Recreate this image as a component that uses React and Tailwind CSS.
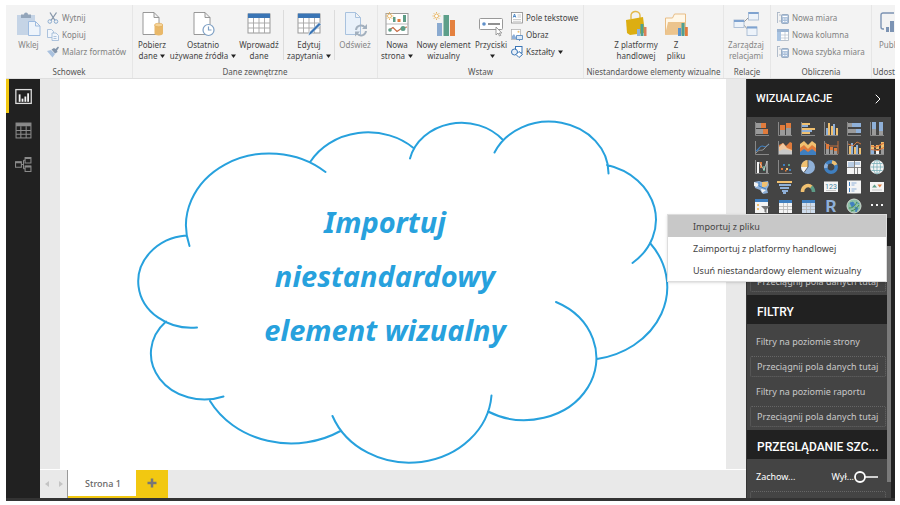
import React, { useState } from 'react';
import { ChevronRight } from 'lucide-react';

const ORANGE = '#e07b3c';
const YELLOW = '#f0c070';
const BLUE = '#8fb0d8';
const NAVY = '#3f7fc0';
const GREY = '#9a9a9a';
const GREEN = '#5d9c86';
const WHITE = '#f4f4f4';

/* ---------- icon helpers ---------- */

const Svg = ({ size = 'w-4 h-4', box = '0 0 16 16', children }) => (
  <svg className={`${size} shrink-0 overflow-visible`} viewBox={box} fill="none" aria-hidden="true">
    {children}
  </svg>
);

// rows: [x, y, width, height, fill]
const Rects = ({ rows }) =>
  rows.map(([x, y, w, h, fill], i) => <rect key={i} x={x} y={y} width={w} height={h} fill={fill} />);

const Axis = () => <path d="M1.5 1v13.5H15" stroke="#888" strokeWidth="1" />;

const Chart = ({ rows, children }) => (
  <Svg>
    <Axis />
    <Rects rows={rows} />
    {children}
  </Svg>
);

const Grid = ({ fill = WHITE }) => (
  <Svg>
    <rect x="2" y="2" width="13" height="13" fill={fill} />
    <rect x="2" y="2" width="13" height="3" fill={NAVY} />
    <path d="M2 8.5h13M2 11.5h13M6.5 5v10M10.5 5v10" stroke="#b5b5b5" strokeWidth="0.8" />
  </Svg>
);

const visuals = [
  ['Skumulowany wykres słupkowy', <Chart rows={[[2, 2, 5, 5, GREY], [7, 2, 5, 5, ORANGE], [2, 8, 7, 5, GREY], [9, 8, 5, 5, ORANGE]]} />],
  ['Skumulowany wykres kolumnowy', <Chart rows={[[3, 9, 5, 5, GREY], [3, 4, 5, 5, ORANGE], [9, 7, 5, 7, GREY], [9, 2, 5, 5, ORANGE]]} />],
  ['Grupowany wykres słupkowy', <Chart rows={[[2, 2, 8, 2, YELLOW], [2, 4, 6, 2, BLUE], [2, 7, 13, 2, YELLOW], [2, 9, 10, 2, BLUE], [2, 11, 8, 2, YELLOW]]} />],
  ['Grupowany wykres kolumnowy', <Chart rows={[[3, 7, 2, 7, BLUE], [5, 2, 2, 12, YELLOW], [8, 5, 2, 9, YELLOW], [10, 3, 2, 11, BLUE], [13, 7, 2, 7, YELLOW]]} />],
  ['100% skumulowany słupkowy', <Chart rows={[[2, 2, 4, 4, GREY], [6, 2, 9, 4, BLUE], [2, 8, 8, 4, GREY], [10, 8, 5, 4, BLUE]]} />],
  ['100% skumulowany kolumnowy', <Chart rows={[[3, 1, 4, 7, BLUE], [3, 8, 4, 6, GREY], [10, 1, 4, 9, BLUE], [10, 10, 4, 4, GREY]]} />],
  ['Wykres liniowy', (
    <Chart rows={[]}>
      <path d="M2 11c3-1 3-5 6-5s3 3 7-2" stroke={NAVY} strokeWidth="1.2" />
      <path d="M2 13c4-5 5-1 8-4s3-4 5-5" stroke={GREY} strokeWidth="1" />
    </Chart>
  )],
  ['Wykres warstwowy', (
    <Chart rows={[]}>
      <path d="M2 5l4-2 3 3 4-4 2 1v10H2z" fill={ORANGE} />
      <path d="M2 7l4-4 4 5 5 2v4H2z" fill="#f0c8a0" />
      <path d="M2 11l5-2 8 2v3H2z" fill="#c9c9c9" />
    </Chart>
  )],
  ['Skumulowany warstwowy', (
    <Svg>
      <path d="M0 4l4-3 4 4 4-4 4 3v11H0z" fill={YELLOW} />
      <path d="M0 8l4-3 4 4 4-4 4 3v7H0z" fill={ORANGE} />
      <path d="M0 12l4-3 4 3 4-3 4 3v3H0z" fill={NAVY} />
    </Svg>
  )],
  ['Liniowy i skumulowany kolumnowy', (
    <Chart rows={[[3, 9, 3, 5, GREY], [3, 4, 3, 5, ORANGE], [7, 10, 3, 4, GREY], [7, 7, 3, 3, ORANGE], [11, 11, 3, 3, GREY], [11, 8, 3, 3, ORANGE]]}>
      <path d="M2 3l5 3h8M15 1v13" stroke={ORANGE} strokeWidth="0.8" />
    </Chart>
  )],
  ['Liniowy i grupowany kolumnowy', (
    <Chart rows={[[3, 6, 2, 8, YELLOW], [5, 3, 2, 11, BLUE], [8, 7, 2, 7, YELLOW], [10, 5, 2, 9, BLUE], [13, 8, 2, 6, YELLOW]]}>
      <path d="M2 4l5 2 4-4 4 2" stroke={ORANGE} strokeWidth="0.9" />
    </Chart>
  )],
  ['Wykres wstążkowy', (
    <Chart rows={[[2, 5, 3, 4, YELLOW], [2, 9, 3, 5, BLUE], [7, 5, 3, 4, YELLOW], [7, 10, 3, 4, WHITE], [12, 2, 3, 7, YELLOW], [12, 9, 3, 5, GREY]]}>
      <path d="M2 6l5 1 8-4M2 9.500l7 1 6-3" stroke={ORANGE} strokeWidth="1.2" />
    </Chart>
  )],
  ['Wykres kaskadowy', (
    <Chart rows={[[3, 3, 2, 11, WHITE], [6, 3, 2, 6, ORANGE], [9, 7, 2, 5, GREEN], [12, 2, 2, 12, GREY]]}>
      <path d="M5 3l5 8 3-9" stroke="#ddd" strokeWidth="0.7" />
    </Chart>
  )],
  ['Wykres punktowy', (
    <Chart rows={[[4, 9, 2, 2, ORANGE], [6, 5, 2, 2, NAVY], [9, 9, 2, 2, YELLOW], [11, 5, 2, 2, GREEN], [12, 10, 2, 2, NAVY], [8, 11, 1.5, 1.5, ORANGE]]} />
  )],
  ['Wykres kołowy', (
    <Svg>
      <circle cx="8" cy="8" r="7" fill={BLUE} />
      <path d="M8 8V1A7 7 0 0 0 1 8z" fill={YELLOW} />
      <path d="M8 8H1a7 7 0 0 0 3 5.500z" fill={WHITE} />
      <path d="M8 1v7l-4 5.500" stroke="#444" strokeWidth="0.8" />
    </Svg>
  )],
  ['Wykres pierścieniowy', (
    <Svg>
      <circle cx="8" cy="8" r="5.200" stroke={NAVY} strokeWidth="3.500" />
      <path d="M9 2.900a5.200 5.200 0 0 1 3.800 3" stroke={YELLOW} strokeWidth="3.500" />
      <path d="M2.800 9a5.200 5.200 0 0 1 1-4" stroke={BLUE} strokeWidth="3.500" />
    </Svg>
  )],
  ['Mapa drzewa', (
    <Svg>
      <Rects rows={[[1, 2, 14, 13, WHITE], [2, 3, 6, 5, '#b9cde4'], [9, 3, 5, 3, '#b9cde4']]} />
      <path d="M8.500 2v13M1 8.500h14M11.500 8.500V15" stroke="#777" strokeWidth="0.9" />
    </Svg>
  )],
  ['Mapa', (
    <Svg>
      <circle cx="8" cy="8" r="7" fill={WHITE} />
      <path d="M1 8h14M8 1v14M2.500 4.500h11M2.500 11.500h11" stroke="#79aeb8" strokeWidth="0.8" />
      <ellipse cx="8" cy="8" rx="3.500" ry="7" stroke="#79aeb8" strokeWidth="0.8" />
    </Svg>
  )],
  ['Kartogram', (
    <Svg>
      <path d="M0 3l5-1 3 1 6-1 1 4-2 4 1 4-5 1-3-4-5-2z" fill={BLUE} />
      <path d="M8 3l6 0-1 4-5 2z" fill={YELLOW} />
      <path d="M0 3l5 2-2 3-3-1zM7 10l5 1-4 3z" fill={WHITE} />
      <path d="M5 3v4l7 3" stroke={NAVY} strokeWidth="1" />
    </Svg>
  )],
  ['Lejek', <Svg><Rects rows={[[0, 2, 15, 2, YELLOW], [2, 5, 12, 2, BLUE], [3, 8, 9, 2, BLUE], [5, 11, 6, 2, BLUE], [6, 13, 3, 2, BLUE]]} /></Svg>],
  ['Miernik', (
    <Svg>
      <path d="M2.500 13a5.500 6 0 0 1 9-5" stroke={YELLOW} strokeWidth="3.500" />
      <path d="M11.200 7.800a5.500 6 0 0 1 2.300 5.200" stroke={GREEN} strokeWidth="3.500" />
    </Svg>
  )],
  ['Karta', (
    <Svg>
      <rect x="1" y="2.500" width="14" height="10.500" fill={WHITE} />
      <text x="8" y="9.500" fontSize="7" textAnchor="middle" fill="#3f7f9d" fontFamily="Roboto, sans-serif">123</text>
      <path d="M3 11.500h10" stroke="#bbb" strokeWidth="0.8" />
    </Svg>
  )],
  ['Karta z wieloma wierszami', (
    <Svg>
      <rect x="1" y="1.500" width="14" height="13" fill={WHITE} />
      <path d="M3.500 3v4M3.500 9v4" stroke={NAVY} strokeWidth="1" />
      <path d="M5.500 4h5M5.500 6h3M5.500 10h5M5.500 12h3" stroke={BLUE} strokeWidth="1.2" />
    </Svg>
  )],
  ['Kluczowy wskaźnik wydajności', (
    <Svg>
      <rect x="1" y="3" width="14" height="10" fill={WHITE} />
      <path d="M3 8.500l2.500-3 2.500 3z" fill={GREEN} />
      <path d="M8.500 5.500h4.500l-2.200 3z" fill={ORANGE} />
      <path d="M3 11h10" stroke="#bbb" strokeWidth="0.8" />
    </Svg>
  )],
  ['Fragmentator', (
    <Svg>
      <Rects rows={[[1, 1, 13, 14, WHITE], [1, 1, 13, 3, NAVY], [3, 6, 2, 2, YELLOW], [3, 10, 2, 2, YELLOW]]} />
      <path d="M7 8h9l-3.500 3.500V15l-2-1v-2.500z" fill="#777" />
    </Svg>
  )],
  ['Tabela', <Grid />],
  ['Macierz', <Grid fill="#cfdded" />],
  ['Wizualizacja skryptu języka R', (
    <Svg>
      <text x="8" y="14" fontSize="17" fontWeight="700" textAnchor="middle" fill={BLUE} fontFamily="Roboto, sans-serif">R</text>
    </Svg>
  )],
  ['ArcGIS Maps', (
    <Svg>
      <circle cx="8" cy="8" r="7" fill="#8cc0a8" stroke="#cfd8d0" />
      <path d="M4 5l3-1 2 3-3 2zM9 9l3 1-2 4zM10 4l3 2" fill={NAVY} stroke={NAVY} strokeWidth="0.8" />
      <path d="M3 10c4 0 6-2 8-6M5 13c4-1 6-3 8-6" stroke="#4a8f4f" strokeWidth="1" />
    </Svg>
  )],
  ['Więcej opcji', <Svg><Rects rows={[[2, 6, 2, 2, WHITE], [7, 6, 2, 2, WHITE], [12, 6, 2, 2, WHITE]]} /></Svg>],
];

/* ---------- ribbon icons, drawn on a 24px box ---------- */

const Big = ({ children }) => <Svg size="w-6 h-6" box="0 0 24 24">{children}</Svg>;
const Small = ({ children }) => <Svg size="w-3 h-3" box="0 0 12 12">{children}</Svg>;

const Page = () => (
  <path d="M3 .5h11l5 5v17H3zM14 .5v5h5" fill="#fff" stroke="#8d8d8d" strokeWidth="0.9" />
);

const TableGrid = () => (
  <>
    <rect x="1" y="2" width="22" height="19" fill="#fff" stroke="#999" />
    <rect x="1" y="1.500" width="22" height="4.500" fill="#3a75b5" />
    <path d="M1 11h22M1 16h22M6.500 6v15M12 6v15M17.500 6v15" stroke="#a5a5a5" strokeWidth="0.9" />
  </>
);

const Sun = () => (
  <g stroke="#eab765" strokeWidth="1">
    <circle cx="4.500" cy="4" r="2" fill="#fff" />
    <path d="M4.500 0v1.200M4.500 6.800V8M.5 4h1.200M7.300 4h1.200M1.700 1.200l.9.9M6.400 5.900l.9.9M1.700 6.800l.9-.9M6.400 2.100l.9-.9" />
  </g>
);

const PasteIcon = () => (
  <Big>
    <rect x="0" y="3" width="18" height="20" fill="#c5d4e6" />
    <path d="M4 2.500h3a2 2 0 0 1 4 0h3V6H4z" fill="#93a5ba" />
    <path d="M11.500 9.500h7l4.500 4.500v9.500H11.500zM18.500 9.500V14H23" fill="#eef4fb" stroke="#9dbbe0" />
  </Big>
);
const GetDataIcon = () => (
  <Big>
    <Page />
    <path d="M14.500 13v8.500c0 2.500 8.500 2.500 8.500 0V13z" fill="#e9b869" />
    <ellipse cx="18.700" cy="13" rx="4.200" ry="1.800" fill="#f5d398" stroke="#dda853" strokeWidth="0.6" />
  </Big>
);
const RecentIcon = () => (
  <Big>
    <Page />
    <circle cx="17.500" cy="18" r="5.500" fill="#fff" stroke="#7d9fc4" strokeWidth="1.200" />
    <path d="M17.500 14.500V18h3" stroke="#7d9fc4" strokeWidth="1.200" />
  </Big>
);
const EnterIcon = () => <Big><TableGrid /></Big>;
const EditIcon = () => (
  <Big>
    <TableGrid />
    <path d="M11 24l1.500-4L22 10.500l2 2-9.500 9.500z" fill="#3a75b5" stroke="#fff" strokeWidth="0.6" />
  </Big>
);
const RefreshIcon = () => (
  <Big>
    <path d="M2.500 .5h10l5 5v17h-15zM12.500 .5v5h5" fill="#e9f1fa" stroke="#a9c2de" />
    <path d="M13 18a5 5 0 0 1 9-2.500M23 19a5 5 0 0 1-9 2.500" stroke="#a3b0be" strokeWidth="2" />
    <path d="M24 12v5h-5zM12 24.500v-5h5z" fill="#a3b0be" />
  </Big>
);
const NewPageIcon = () => (
  <Big>
    <rect x="1" y="1.500" width="22" height="21" fill="#fff" stroke="#999" />
    <Rects rows={[[8, 5, 2.5, 5, GREEN], [12.500, 7, 3, 3, ORANGE], [18, 3, 3, 7, GREEN]]} />
    <path d="M1 12h22" stroke="#aaa" strokeWidth="0.8" />
    <path d="M4 18l4-2.500 4 4 5-3.500 5-1" stroke="#c76b45" strokeWidth="1.200" />
    <circle cx="5" cy="18" r="1.800" fill={GREEN} />
    <circle cx="18" cy="16.500" r="2.500" fill={GREEN} />
    <Sun />
  </Big>
);
const NewVisualIcon = () => (
  <Big>
    <Rects rows={[[5, 11, 5, 13, '#8aaad0'], [11.500, 3, 5.500, 21, '#5d9f8a'], [18, 8, 5, 16, '#e4813f']]} />
    <Sun />
  </Big>
);
const ButtonsIcon = () => (
  <Big>
    <rect x=".5" y="6.500" width="23" height="11" rx="1" fill="#fff" stroke="#999" />
    <circle cx="5" cy="12" r="1.800" fill="#5f8fc8" />
    <path d="M9 12h12" stroke="#555" strokeWidth="1.300" />
    <path d="M17 15v8l2-2 1.500 3 1.300-.7L20.300 21h2.500z" fill="#fff" stroke="#888" strokeWidth="0.8" />
  </Big>
);
const StoreIcon = () => (
  <Big>
    <path d="M7 7V4a4 3.500 0 0 1 9-1v4" stroke="#e3b94a" strokeWidth="1.400" />
    <path d="M2 8l17-3 2 16-15 2-3-2z" fill="#dcae12" />
    <Rects rows={[[13, 17, 3, 7, '#8fb3dc'], [16.500, 12, 3, 12, '#4f9f92'], [20, 15, 2.500, 9, '#d9805c']]} />
  </Big>
);
const FileIcon = () => (
  <Big>
    <path d="M1.500 22V6h7l2-4h11v20z" fill="#fff7e8" stroke="#e8bd85" />
    <path d="M1 23l3-13h18v12z" fill="#ecc48d" />
    <Rects rows={[[14, 16, 3, 8, '#5a93cf'], [17.500, 11, 3, 13, '#4f9f92'], [21, 15, 2.800, 9, '#e07b3c']]} />
  </Big>
);
const RelationsIcon = () => (
  <Big>
    <path d="M9 11l6-6M9 12l6 7" stroke="#999" />
    <g fill="#edf3fa" stroke="#a9bcd3" strokeWidth="0.9">
      <rect x="0" y="8" width="10" height="7.500" />
      <rect x="14.500" y=".5" width="10" height="7.500" />
      <rect x="13" y="15" width="10" height="8.500" />
    </g>
    <Rects rows={[[0, 8, 10, 2, '#7fa3d0'], [14.500, 0, 10, 2, '#7fa3d0'], [13, 14.500, 10, 2, '#7fa3d0']]} />
  </Big>
);
const PublishIcon = () => (
  <Big>
    <path d="M5 17H4a2 2 0 0 1-2-2V3a2 2 0 0 1 2-2h11" stroke="#7c93b3" strokeWidth="1.400" />
    <Rects rows={[[7, 15, 3, 5, '#7c93b3'], [11, 9, 4, 11, '#7c93b3']]} />
  </Big>
);

const CutIcon = () => (
  <Small>
    <path d="M3 .5l5 8M9.500 .5l-5.500 8" stroke="#8797aa" strokeWidth="1.300" />
    <circle cx="2.800" cy="9.500" r="1.800" stroke="#8aabd0" />
    <circle cx="9" cy="9.500" r="1.800" stroke="#8aabd0" />
  </Small>
);
const CopyIcon = () => (
  <Small>
    <path d="M.5 .5h4l2 2v6h-6z" fill="#f2f6fb" stroke="#9bb6d6" strokeWidth="0.8" />
    <path d="M5 4h4l2.500 2.500v5H5zM6.500 7.500h3M6.500 9.500h3" fill="#f2f6fb" stroke="#9bb6d6" strokeWidth="0.8" />
  </Small>
);
const BrushIcon = () => (
  <Small>
    <path d="M0 5l4-1 4 4-2.500 3.500z" fill="#a9c1de" />
    <path d="M4.500 3.500L7 2l1.500 1L11 .5l1 1-2 3 .5 1.500L8 7.500z" fill="#8294aa" />
  </Small>
);
const TextBoxIcon = () => (
  <Small>
    <rect x=".5" y=".5" width="11" height="10.500" fill="#fff" stroke="#8a8a8a" strokeWidth="0.8" />
    <path d="M2.200 5.500L3.500 2l1.300 3.500M2.500 4.500h2" stroke={NAVY} strokeWidth="0.9" />
    <path d="M6.500 3h3.500M6.500 5h3.500M2 7.500h8M2 9.300h8" stroke="#aaa" strokeWidth="0.6" />
  </Small>
);
const ImageIcon = () => (
  <Small>
    <rect x=".5" y=".5" width="9" height="10" fill="#fff" stroke="#aaa" strokeWidth="0.7" />
    <circle cx="7.500" cy="2.800" r="1" fill={YELLOW} />
    <path d="M1 10V7l2-2 3 5z" fill={BLUE} />
    <path d="M5.500 6.500h6v4h-6zM8.500 10.500v1.500" fill="#dfeaf6" stroke="#5b8cc2" strokeWidth="0.9" />
  </Small>
);
const ShapesIcon = () => (
  <Small>
    <rect x="4.500" y=".5" width="6.500" height="6.500" fill="#fff" stroke="#3a75b5" />
    <circle cx="3.500" cy="6" r="3" fill="#e7eff8" stroke="#3a75b5" />
    <path d="M8 5.500l3.500 3-3.500 3-3-3z" fill="#fff" stroke="#3a75b5" />
  </Small>
);
const MeasureIcon = () => (
  <Small>
    <path d="M.5 0v11M0 .5h3M2 3h2M2 9h2" stroke="#aab7c6" strokeWidth="0.9" />
    <rect x="4.500" y="2.500" width="7" height="9" rx="1" fill="#a9bfda" stroke="#8499b3" strokeWidth="0.7" />
    <path d="M5.500 4.500h5" stroke="#fff" strokeWidth="1.200" />
    <path d="M6 7h4M6 9.500h4" stroke="#fff" strokeWidth="1" strokeDasharray="1 .6" />
  </Small>
);
const ColumnIcon = () => (
  <Small>
    <rect x=".5" y=".5" width="11" height="11" fill="#fff" stroke="#a9b5c3" strokeWidth="0.8" />
    <Rects rows={[[0, 0, 12, 3, '#9bb3d0'], [0, 3, 4, 9, '#a9c4e2']]} />
    <path d="M4 6h8M4 9h8M8 3v9" stroke="#b4bfcb" strokeWidth="0.7" />
  </Small>
);

/* ---------- ribbon parts ---------- */

const Caret = () => (
  <svg className="inline-block w-[5px] h-[5px] ml-[3px] align-middle" viewBox="0 0 5 5" aria-hidden="true">
    <path d="M0 .5h5L2.500 4z" fill="#222" />
  </svg>
);

const BigButton = ({ icon, top, bottom, caret, disabled, className }) => (
  <button
    type="button"
    disabled={disabled}
    className={`flex flex-col items-center shrink-0 pt-[7px] leading-[11px] whitespace-nowrap ${disabled ? 'text-[#858585]' : 'text-[#444]'} ${className}`}
  >
    {icon}
    <span className="mt-[3px]">{top}</span>
    <span>
      {bottom}
      {caret && <Caret />}
    </span>
  </button>
);

const SmallButton = ({ icon, label, caret, disabled }) => (
  <button
    type="button"
    disabled={disabled}
    className={`flex items-center gap-[3px] h-[17px] whitespace-nowrap ${disabled ? 'text-[#808080]' : 'text-[#444]'}`}
  >
    {icon}
    <span>
      {label}
      {caret && <Caret />}
    </span>
  </button>
);

const Group = ({ label, className, children }) => (
  <section className={`flex flex-col border-r border-[#e6e6e6] ${className}`}>
    <div className="flex h-[61px]">{children}</div>
    <h2 className="text-center leading-[11px] text-[#555] whitespace-nowrap">{label}</h2>
  </section>
);

const Divider = () => <div className="w-px h-[50px] mt-[5px] bg-[#dcdcdc]" />;

const Ribbon = () => (
  <header className="flex h-[74px] shrink-0 bg-[#f3f3f3] border-b border-[#dedede] text-[8px]">
    <Group label="Schowek" className="w-[127px] shrink-0">
      <BigButton icon={<PasteIcon />} top="Wklej" disabled className="w-[41px] pl-1" />
      <div className="flex flex-col pt-1">
        <SmallButton icon={<CutIcon />} label="Wytnij" disabled />
        <SmallButton icon={<CopyIcon />} label="Kopiuj" disabled />
        <SmallButton icon={<BrushIcon />} label="Malarz formatów" disabled />
      </div>
    </Group>
    <Group label="Dane zewnętrzne" className="w-[245px] shrink-0">
      <BigButton icon={<GetDataIcon />} top="Pobierz" bottom="dane" caret className="w-[38px]" />
      <BigButton icon={<RecentIcon />} top="Ostatnio" bottom="używane źródła" caret className="w-[64px]" />
      <BigButton icon={<EnterIcon />} top="Wprowadź" bottom="dane" className="w-[48px]" />
      <Divider />
      <BigButton icon={<EditIcon />} top="Edytuj" bottom="zapytania" caret className="w-[50px]" />
      <Divider />
      <BigButton icon={<RefreshIcon />} top="Odśwież" disabled className="w-[40px]" />
    </Group>
    <Group label="Wstaw" className="w-[206px] shrink-0">
      <BigButton icon={<NewPageIcon />} top="Nowa" bottom="strona" caret className="w-[38px]" />
      <BigButton icon={<NewVisualIcon />} top="Nowy element" bottom="wizualny" className="w-[55px]" />
      <BigButton icon={<ButtonsIcon />} top="Przyciski" caret className="w-[40px]" />
      <div className="flex flex-col pt-1">
        <SmallButton icon={<TextBoxIcon />} label="Pole tekstowe" />
        <SmallButton icon={<ImageIcon />} label="Obraz" />
        <SmallButton icon={<ShapesIcon />} label="Kształty" caret />
      </div>
    </Group>
    <Group label="Niestandardowe elementy wizualne" className="w-[140px] shrink-0">
      <BigButton icon={<StoreIcon />} top="Z platformy" bottom="handlowej" className="w-[52px] ml-[26px]" />
      <BigButton icon={<FileIcon />} top="Z" bottom="pliku" className="w-[28px]" />
    </Group>
    <Group label="Relacje" className="w-[47px] shrink-0">
      <BigButton icon={<RelationsIcon />} top="Zarządzaj" bottom="relacjami" disabled className="w-[44px]" />
    </Group>
    <Group label="Obliczenia" className="w-[101px] shrink-0">
      <div className="flex flex-col pt-1 pl-[6px]">
        <SmallButton icon={<MeasureIcon />} label="Nowa miara" disabled />
        <SmallButton icon={<ColumnIcon />} label="Nowa kolumna" disabled />
        <SmallButton icon={<MeasureIcon />} label="Nowa szybka miara" disabled />
      </div>
    </Group>
    <section className="flex flex-col flex-1 min-w-0">
      <div className="flex h-[61px] overflow-hidden">
        <BigButton icon={<PublishIcon />} top="Publ" disabled className="ml-[7px] items-start" />
      </div>
      <h2 className="leading-[11px] text-right text-[#555]">Udost</h2>
    </section>
  </header>
);

/* ---------- left navigation ---------- */

const views = [
  ['Raport', (
    <Svg size="w-[17px] h-[17px]">
      <rect x=".8" y="1.500" width="14.500" height="13" stroke="#ddd" strokeWidth="1.200" />
      <Rects rows={[[3.5, 6, 1.7, 7, WHITE], [6.200, 10, 1.7, 3, WHITE], [8.900, 8, 1.7, 5, WHITE], [11.500, 5, 1.7, 8, WHITE]]} />
    </Svg>
  )],
  ['Dane', (
    <Svg size="w-[17px] h-[17px]">
      <rect x="1" y="1" width="14" height="14" stroke="#8a8a8a" />
      <rect x="1" y="1" width="14" height="3" fill="#8a8a8a" />
      <path d="M1 8h14M1 11.500h14M5.500 4v11M10.500 4v11" stroke="#8a8a8a" />
    </Svg>
  )],
  ['Relacje', (
    <Svg size="w-[17px] h-[17px]">
      <path d="M.5 5.500h5.500v5H.5zM9.500 1.500H15v5H9.500zM9.500 9.500H15v5H9.500zM6 8h2M8 4v8M8 4h1.500M8 12h1.500" stroke="#8a8a8a" />
      <path d="M.5 6h5.500M9.500 2H15M9.500 10H15" stroke="#8a8a8a" strokeWidth="1.500" />
    </Svg>
  )],
];

const SideNav = () => {
  const [active, setActive] = useState('Raport');
  return (
    <nav className="w-[34px] shrink-0 bg-[#212121]">
      {views.map(([name, icon]) => (
        <button
          key={name}
          type="button"
          aria-label={name}
          onClick={() => setActive(name)}
          className={`flex items-center justify-center w-full h-[34px] pt-px pr-[2px] border-l-[3px] ${active === name ? 'border-[#f2c811]' : 'border-transparent'}`}
        >
          {icon}
        </button>
      ))}
    </nav>
  );
};

/* ---------- report canvas ---------- */

const Canvas = () => (
  <div className="flex-1 px-5 bg-[#e9e9e9]">
    <div className="grid h-full bg-white place-items-center">
      <svg className="col-start-1 row-start-1 w-full" viewBox="60 79 666 390" fill="none" aria-hidden="true">
        <path
          stroke="#27a1dd"
          strokeWidth="2"
          strokeLinecap="round"
          d="M189.500 246A83.500 72 0 0 1 325.500 172
            M186 235.500A53 46 0 0 0 197 327.500
            M166 321.500A53.500 46 0 0 0 223.500 396.500
            M210 401A92 80 0 0 0 340.500 431
            M332.500 416A82.300 72.500 0 0 0 491.500 395.500
            M556 302A71.900 62.200 0 1 1 488 411.500
            M650 243A85 73 0 0 1 597 359
            M607 165A65.500 56.500 0 0 1 632.500 263
            M494.500 152.500A59.500 51.500 0 0 1 608.500 173.500
            M410 158.500A53 46 0 0 1 503 140
            M310.500 161.500A66 57 0 0 1 413.500 148"
        />
      </svg>
      <h1 className="col-start-1 row-start-1 pt-1 pr-4 text-center text-[29px] leading-[54px] font-bold italic text-[#27a1dd]">
        Importuj
        <br />
        niestandardowy
        <br />
        element wizualny
      </h1>
    </div>
  </div>
);

const PageTabs = () => (
  <div className="flex h-[29px] shrink-0 bg-[#e9e9e9] border-t border-white text-[9px]">
    <div className="flex items-center justify-center w-7 gap-2 border-r border-[#999]">
      <button type="button" aria-label="Poprzednia strona">
        <Svg size="w-[6px] h-[6px]" box="0 0 6 6"><path d="M5 0v6L1 3z" fill="#c4c4c4" /></Svg>
      </button>
      <button type="button" aria-label="Następna strona">
        <Svg size="w-[6px] h-[6px]" box="0 0 6 6"><path d="M1 0v6l4-3z" fill="#c4c4c4" /></Svg>
      </button>
    </div>
    <button type="button" className="w-[68px] pt-[2px] pl-[2px] bg-white border-b-2 border-[#f2c811] font-medium text-[#666]">
      Strona 1
    </button>
    <button type="button" aria-label="Nowa strona" className="flex items-center justify-center w-8 pb-[2px] bg-[#f2c811]">
      <Svg size="w-[10px] h-[10px]" box="0 0 10 10"><path d="M5 0.500v9M.5 5h9" stroke="#777" strokeWidth="2.500" /></Svg>
    </button>
  </div>
);

/* ---------- visualizations pane ---------- */

const menuItems = ['Importuj z pliku', 'Zaimportuj z platformy handlowej', 'Usuń niestandardowy element wizualny'];

const DropField = () => (
  <div className="flex items-center h-[21px] px-[6px] border border-dotted border-[#666] rounded-[2px] whitespace-nowrap">
    Przeciągnij pola danych tutaj
  </div>
);

const PaneTitle = ({ children }) => (
  <h2 className="flex items-center h-[29px] pt-1 pl-[10px] bg-[#212121] font-['Roboto',sans-serif] text-[12px] font-medium text-white whitespace-nowrap">
    {children}
  </h2>
);

const Visualizations = () => (
  <aside className="relative w-[149px] shrink-0 bg-[#212121] border-l border-[#333] pr-1 text-[9px] text-[#c8c8c8]">
    <div className="flex items-center justify-between h-[38px] pt-[2px] pl-[9px] pr-[5px] text-white">
      <h2 className="font-['Roboto',sans-serif] text-[11px] font-medium">WIZUALIZACJE</h2>
      <button type="button" aria-label="Zwiń okienko">
        <ChevronRight className="w-4 h-4" strokeWidth={1.5} />
      </button>
    </div>
    <div className="h-[101px] bg-[#444] px-[3px] pt-[2px]">
      <div className="grid grid-cols-6 grid-rows-5 h-[97px]">
        {visuals.map(([name, icon]) => (
          <button key={name} type="button" aria-label={name} className="flex items-center justify-center">
            {icon}
          </button>
        ))}
      </div>
    </div>

    <ul className="absolute z-10 top-[135px] right-2 w-[220px] bg-white border border-[#ddd] shadow-sm text-[#444]">
      {menuItems.map((item, i) => (
        <li key={item}>
          <button
            type="button"
            className={`w-full h-[22px] pt-[2px] pl-[25px] text-left whitespace-nowrap hover:bg-[#c8c8c8] ${i === 0 ? 'bg-[#c8c8c8]' : ''}`}
          >
            {item}
          </button>
        </li>
      ))}
    </ul>

    <div className="flex mt-7 bg-[#444]">
      <div className="flex-1 min-w-0">
        <div className="h-[49px] pl-[3px] pr-px pt-[25px]">
          <DropField />
        </div>
        <PaneTitle>FILTRY</PaneTitle>
        <div className="h-[106px] pl-[3px] pr-px pt-[7px]">
          <p className="h-[25px] pl-[6px] pt-[4px] leading-[14px]">Filtry na poziomie strony</p>
          <DropField />
          <p className="h-[29px] pl-[6px] pt-[8px] leading-[14px]">Filtry na poziomie raportu</p>
          <DropField />
        </div>
        <PaneTitle>PRZEGLĄDANIE SZC...</PaneTitle>
        <div className="h-[39px] pl-[3px] pr-px overflow-hidden">
          <label className="flex items-center h-8 pl-[6px] pt-1 pr-2 text-white">
            <span className="flex-1">Zachow...</span>
            <span>Wył...</span>
            <input type="checkbox" className="sr-only" />
            <Svg size="w-6 h-3" box="0 0 24 12">
              <circle cx="6" cy="6" r="5" stroke="#fff" strokeWidth="1.800" />
              <path d="M11 6h13" stroke="#fff" strokeWidth="1.500" />
            </Svg>
          </label>
          <DropField />
        </div>
      </div>
      <div className="w-1 h-[236px] bg-[#7a7a7a]" />
    </div>
  </aside>
);

const App = () => (
  <div className="flex flex-col min-h-screen pt-[5px] pb-1 pl-[6px] pr-[5px] bg-white font-['Noto_Sans',sans-serif]">
    <Ribbon />
    <main className="flex flex-1 border-b-[3px] border-[#333]">
      <SideNav />
      <div className="flex flex-col flex-1 min-w-0">
        <Canvas />
        <PageTabs />
      </div>
      <Visualizations />
    </main>
  </div>
);

export default App;
